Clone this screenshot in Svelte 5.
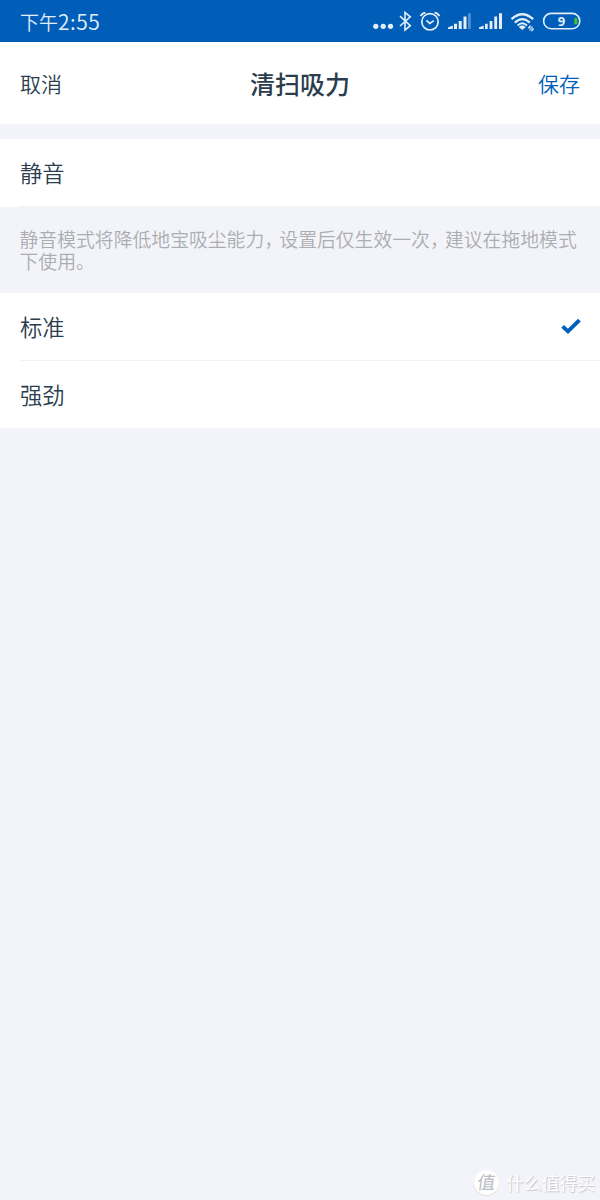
<script>
  let selected = "standard";

  const groups = [
    {
      note: ["静音模式将降低地宝吸尘能力", "设置后仅生效一次", "建议在拖地模式下使用。"],
      items: [{ id: "quiet", label: "静音" }],
    },
    {
      note: null,
      items: [
        { id: "standard", label: "标准" },
        { id: "strong", label: "强劲" },
      ],
    },
  ];
</script>

<main>
  <div class="status">
    <span class="time">下午<span class="digits">2:55</span></span>
    <svg width="216" height="42" viewBox="370 0 216 42" fill="none" stroke="#e4eefa">
      <g fill="#e4eefa" stroke="none">
        <circle cx="375.8" cy="26.3" r="2.6" />
        <circle cx="383.2" cy="26.3" r="2.6" />
        <circle cx="390.5" cy="26.3" r="2.6" />
      </g>
      <path d="M400 16.2 410.3 25.6 405 30V12.4L410.3 16.8 400 26" stroke-width="1.6" />
      <circle cx="430" cy="21.8" r="8.2" stroke-width="1.7" />
      <path d="M426.4 20.4 429.8 23.4 433.8 20.6" stroke-width="1.7" />
      <path d="M420.6 16.2Q422 13.3 425.4 12.7M439.4 16.2Q438 13.3 434.6 12.7" stroke-width="1.8" />
      <g fill="#e4eefa" stroke="none">
        <path d="M448 29V27.5L452.8 25.6V29Z" />
        <path d="M454 23.8h3V29h-3zM458.7 21h3v8h-3zM463.5 16.6h3V29h-3z" />
        <path d="M468 13.2h2.8V29H468z" opacity=".35" />
        <path d="M479 29V27.5L483.6 25.6V29Z" />
        <path d="M485 23.8h2.7V29H485zM489.6 21h2.8v8h-2.8zM494.3 16.6h2.8V29h-2.8zM499 13.2h3V29h-3z" />
        <path d="M522.3 30 518.8 26.9Q522.3 24.3 525.8 26.9Z" />
      </g>
      <g stroke-width="2.3">
        <path d="M511.5 19.2Q522.3 9.3 533.1 19.2" />
        <path d="M514.8 22.6Q522.3 15.7 529.8 22.6" />
        <path d="M517.6 25.5Q522.3 21 527 25.5" stroke-width="1.8" />
      </g>
      <path d="M530 30.5V26.3L528.3 28.2M532 26.3V30.5L533.7 28.6" stroke-width="1.1" />
      <rect x="543.6" y="13.4" width="36.2" height="15.3" rx="7.6" stroke-width="1.6" />
      <path d="M577.4 18.4V24Q574.2 25.2 574.2 23V19.4Q574.2 17.2 577.4 18.4Z" fill="#3fc32b" stroke="none" />
      <text x="561.4" y="26" class="level">9</text>
    </svg>
  </div>

  <header>
    <button>取消</button>
    <h1>清扫吸力</h1>
    <button class="save">保存</button>
  </header>

  {#each groups as group}
    <section>
      {#each group.items as item}
        <div class="row" on:click={() => (selected = item.id)} role="presentation">
          <div class="cell">
            <span class="label">{item.label}</span>
            {#if selected === item.id}
              <svg width="20" height="18" viewBox="0 0 20 18">
                <path d="M1.6 8.4 7 13.4 18.4 2.2" fill="none" stroke="#0060bb" stroke-width="3.9" />
              </svg>
            {/if}
          </div>
        </div>
      {/each}
    </section>
    {#if group.note}
      <p class="note">
        {#each group.note as part, i}{#if i}<span class="comma">，</span>{/if}{part}{/each}
      </p>
    {/if}
  {/each}

  <footer>
    <span class="badge"><span>值</span></span>
    <span class="brand">什么值得买</span>
  </footer>
</main>

<style>
  :global(body) {
    margin: 0;
    background: #f3f4f9;
  }
  main {
    display: flex;
    flex-direction: column;
    width: 600px;
    height: 1200px;
    overflow: hidden;
    background: #f3f4f9;
    color: #2b3d4d;
    font-family: "Noto Sans CJK SC", sans-serif;
    font-weight: 350;
  }
  .status {
    display: flex;
    justify-content: space-between;
    height: 42px;
    padding: 0 14px 0 20px;
    background: #005eb8;
    color: #e4eefa;
  }
  .time {
    font-size: 19px;
    line-height: 43px;
  }
  .digits {
    font-size: 21px;
    letter-spacing: 0.5px;
  }
  .level {
    fill: #e4eefa;
    stroke: none;
    font: bold 13px "Open Sans", sans-serif;
    text-anchor: middle;
  }
  header {
    display: grid;
    grid-template-columns: 1fr auto 1fr;
    align-items: center;
    height: 82px;
    margin-bottom: 15px;
    padding: 0 20px;
    background: #fff;
  }
  button {
    justify-self: start;
    padding: 0;
    border: 0;
    background: none;
    color: inherit;
    font: inherit;
    font-size: 21px;
  }
  .save {
    justify-self: end;
    color: #0060bb;
  }
  h1 {
    margin: 0;
    font-size: 25px;
    font-weight: 500;
  }
  section {
    background: #fff;
  }
  .row {
    padding-left: 20px;
  }
  .cell {
    display: flex;
    align-items: center;
    justify-content: space-between;
    box-sizing: border-box;
    height: 68px;
    padding-right: 19px;
    border-bottom: 1px solid #f1f2f3;
    font-size: 22.3px;
  }
  .label {
    padding-bottom: 2px;
  }
  section:last-of-type .row:last-child .cell {
    height: 67px;
    border: 0;
  }
  .note {
    height: 65px;
    margin: 0;
    padding: 21px 20px 0 19.5px;
    color: #acadb1;
    font-size: 18.84px;
    line-height: 22px;
  }
  .comma {
    margin-right: 5.6px;
    font-feature-settings: "halt";
  }
  footer {
    display: flex;
    align-items: center;
    justify-content: flex-end;
    gap: 7px;
    margin-top: auto;
    padding: 0 5px 5px 0;
    height: 26px;
    color: #fff;
  }
  .badge {
    width: 25px;
    height: 25px;
    border-radius: 50%;
    background: #fff;
    color: #bcbdc1;
    font-size: 18px;
    font-weight: 400;
    line-height: 23px;
    text-align: center;
    box-shadow: 0 1px 1px #dcdde1;
  }
  .badge span {
    display: block;
    transform: skewX(-8deg);
  }
  .brand {
    padding-bottom: 1px;
    font-size: 17.8px;
    font-weight: 400;
    text-shadow: 1px 1px 1px #c4c5c9;
  }
</style>
